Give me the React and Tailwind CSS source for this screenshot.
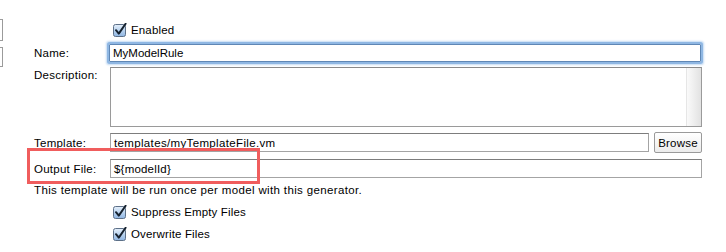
import React from 'react';

function AquaCheck() {
  return (
    <svg width="14" height="14" viewBox="0 0 14 14" className="shrink-0">
      <defs>
        <linearGradient id="cbfill" x1="0" y1="0" x2="0" y2="1">
          <stop offset="0" stopColor="#e6f0fb" />
          <stop offset="0.5" stopColor="#b9d3ef" />
          <stop offset="1" stopColor="#8fb5e2" />
        </linearGradient>
      </defs>
      <rect x="0.5" y="1.5" width="12" height="12" rx="2" fill="url(#cbfill)" stroke="#5d7088" />
      <path d="M3 7.2 L5.8 10.6 L12.6 0.8" fill="none" stroke="#16222f" strokeWidth="2" strokeLinecap="round" strokeLinejoin="round" />
    </svg>
  );
}

function CheckRow({ label, className }) {
  return (
    <div className={`flex items-center gap-[4px] pl-[79px] h-[15px] ${className}`}>
      <AquaCheck />
      <span className="tracking-[0.15px]">{label}</span>
    </div>
  );
}

export default function App() {
  return (
    <div
      className="relative w-[726px] h-[252px] bg-white overflow-hidden flex text-[11.5px] text-black leading-[14px]"
      style={{ fontFamily: '"Liberation Sans", Arial, sans-serif' }}
    >
      {/* trozo de la lista de la izquierda */}
      <div className="w-[3px] flex flex-col pt-[19px] gap-[6px]">
        <div className="h-[22px] border border-l-0 border-[#9b9b9b]" />
        <div className="h-[20px] border border-l-0 border-[#9b9b9b]" />
      </div>

      <div className="flex flex-col pl-[31px] pt-[22px] w-[702px]">
        <CheckRow label="Enabled" />

        {/* Name */}
        <div className="flex items-center h-[22px] mt-[5px]">
          <div className="w-[75px] tracking-[0.25px]">Name:</div>
          <div className="w-[592px] h-[18px] border border-[#5f87b5] rounded-[1px] shadow-[0_0_0_2px_#8fb7e3,0_0_2px_3px_#c4dbf3] flex items-center px-[3px]">
            MyModelRule
          </div>
        </div>

        {/* Description */}
        <div className="flex mt-[3px]">
          <div className="w-[76px] pt-[1px] tracking-[0.25px]">Description:</div>
          <div className="w-[592px] h-[60px] border border-[#9a9a9a] border-t-[#8a8a8a] flex justify-end">
            <div className="w-[15px] h-full bg-gradient-to-r from-[#fafafa] to-[#e2e2e2] border-l border-[#e6e6e6]" />
          </div>
        </div>

        {/* Template */}
        <div className="flex items-center mt-[5px]">
          <div className="w-[76px] tracking-[0.25px]">Template:</div>
          <div className="w-[539px] h-[19px] border border-[#a4a4a4] border-t-[#7d7d7d] flex items-center px-[3px] tracking-[0.35px]">
            templates/myTemplateFile.vm
          </div>
          <button className="ml-[5px] w-[48px] h-[21px] border border-[#9a9a9a] bg-gradient-to-b from-white to-[#ececec] rounded-[2px] flex items-center justify-center tracking-[0.2px]">
            Browse
          </button>
        </div>

        {/* Output File */}
        <div className="flex items-center mt-[6px]">
          <div className="w-[76px] tracking-[0.25px]">Output File:</div>
          <div className="w-[592px] h-[19px] border border-[#a4a4a4] border-t-[#7d7d7d] flex items-center px-[3px] tracking-[0.2px]">
            {'${modelId}'}
          </div>
        </div>

        <div className="mt-[5px] tracking-[0.36px]">This template will be run once per model with this generator.</div>

        <CheckRow label="Suppress Empty Files" className="mt-[7px]" />
        <CheckRow label="Overwrite Files" className="mt-[7px]" />
      </div>

      {/* recuadro rojo de anotación */}
      <div className="absolute left-[27px] top-[148px] w-[233px] h-[36px] border-[3px] border-[#f05d5d]" />
    </div>
  );
}
